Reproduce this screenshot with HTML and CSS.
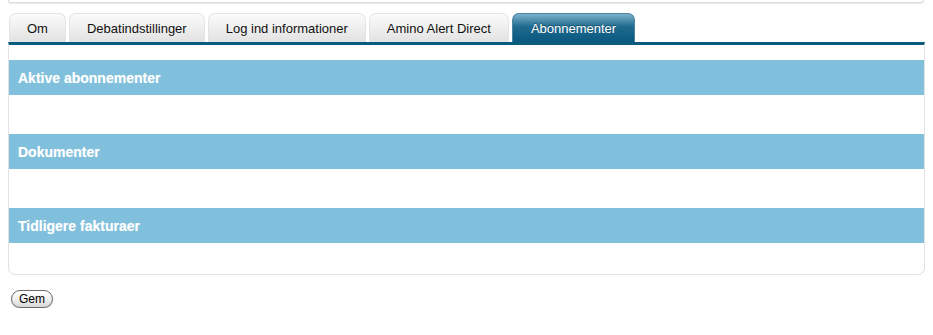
FILE: index.html
```html
<!DOCTYPE html>
<html lang="da">
<head>
    <meta charset="UTF-8">
    <title>Abonnementer</title>
    <link rel="stylesheet" href="styles.css">
</head>
<body>
    <div class="prev-panel"></div>

    <ul class="tabs">
        <li class="tab">Om</li>
        <li class="tab">Debatindstillinger</li>
        <li class="tab">Log ind informationer</li>
        <li class="tab">Amino Alert Direct</li>
        <li class="tab active">Abonnementer</li>
    </ul>

    <div class="panel">
        <div class="section">
            <h2 class="section-title">Aktive abonnementer</h2>
            <div class="section-body"></div>
        </div>
        <div class="section">
            <h2 class="section-title">Dokumenter</h2>
            <div class="section-body"></div>
        </div>
        <div class="section">
            <h2 class="section-title">Tidligere fakturaer</h2>
            <div class="section-body"></div>
        </div>
    </div>

    <button class="save">Gem</button>
</body>
</html>
```

FILE: styles.css
```css
body {
    margin: 0 8px;
    font-family: "Liberation Sans", Arial, sans-serif;
    background-color: #fff;
}
.prev-panel {
    height: 2px;
    border: 1px solid #dcdcdc;
    border-top: none;
    border-radius: 0 0 5px 5px;
    box-shadow: 0 1px 1px rgba(0, 0, 0, 0.08);
    margin-right: 1px;
}
.tabs {
    display: flex;
    gap: 3px;
    list-style: none;
    margin: 10px 0 0 0;
    padding: 0 0 0 1px;
}
.tab {
    height: 29px;
    box-sizing: border-box;
    padding: 0 17px;
    display: flex;
    align-items: center;
    font-size: 13px;
    color: #111;
    background: linear-gradient(#fbfbfb, #e2e2e2);
    border: 1px solid #e4e4e4;
    border-bottom: none;
    border-radius: 7px 7px 0 0;
}
.tab:first-child {
    padding: 0 17px;
}
.tab.active {
    color: #fff;
    background: linear-gradient(#7cb2ca, #1f6b8f 45%, #0a5880);
    border-color: #4a86a4;
    text-shadow: 0 -1px 0 rgba(0, 0, 0, 0.3);
    padding: 0 18px;
}
.panel {
    border: 1px solid #e2e2e2;
    border-top: 3px solid #0b5a80;
    border-radius: 0 0 7px 7px;
    padding-top: 15px;
}
.section-title {
    margin: 0;
    height: 35px;
    display: flex;
    align-items: center;
    padding-left: 9px;
    background-color: #80c0dc;
    color: #fff;
    font-size: 14px;
    font-weight: bold;
    text-shadow: 0 0 1px rgba(255, 255, 255, 0.4);
}
.section-body {
    height: 39px;
}
.section:last-child .section-body {
    height: 31px;
}
.save {
    margin: 15px 0 0 3px;
    width: 42px;
    height: 18px;
    padding: 0;
    font-family: "Liberation Sans", Arial, sans-serif;
    font-size: 12px;
    color: #000;
    background: linear-gradient(#ffffff, #f0f0f0 50%, #d8d8d8);
    border: 1px solid #6a6a6a;
    border-radius: 9px;
    box-shadow: 0 1px 1px rgba(0, 0, 0, 0.2);
}
```
